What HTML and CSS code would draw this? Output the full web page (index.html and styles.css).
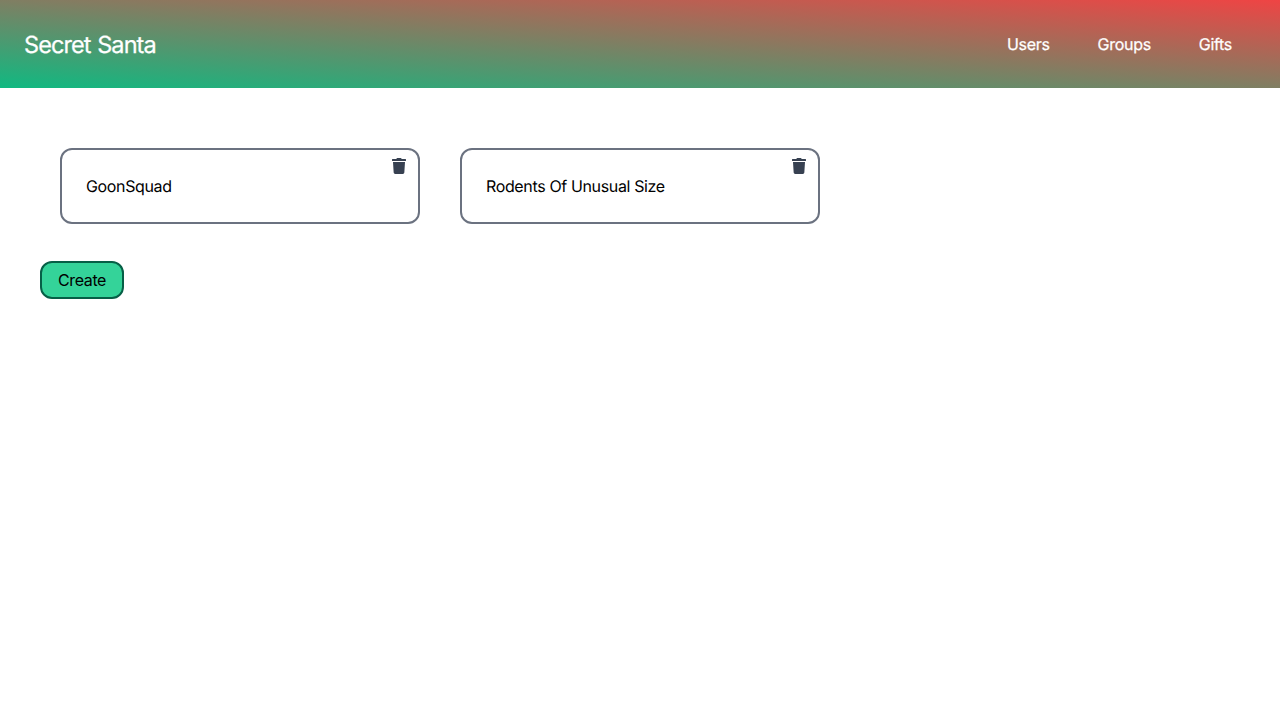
FILE: index.html
```html
<!DOCTYPE html>
<html lang="en">
<head>
<meta charset="utf-8">
<title>Secret Santa</title>
<link rel="stylesheet" href="styles.css">
</head>
<body>
<nav class="navbar">
  <a class="brand">Secret Santa</a>
  <div class="links"><a>Users</a><a>Groups</a><a>Gifts</a></div>
</nav>
<main class="content">
  <div class="groups">
    <div class="card">
      <span>GoonSquad</span>
      <svg class="trash" viewBox="0 0 448 512"><path d="M432 32H312l-9.400-18.700A24 24 0 0 0 281.100 0H166.800a23.720 23.720 0 0 0-21.400 13.300L136 32H16A16 16 0 0 0 0 48v32a16 16 0 0 0 16 16h416a16 16 0 0 0 16-16V48a16 16 0 0 0-16-16zM53.200 467a48 48 0 0 0 47.900 45h245.800a48 48 0 0 0 47.900-45L416 128H32z"/></svg>
    </div>
    <div class="card">
      <span>Rodents Of Unusual Size</span>
      <svg class="trash" viewBox="0 0 448 512"><path d="M432 32H312l-9.400-18.700A24 24 0 0 0 281.100 0H166.800a23.720 23.720 0 0 0-21.400 13.300L136 32H16A16 16 0 0 0 0 48v32a16 16 0 0 0 16 16h416a16 16 0 0 0 16-16V48a16 16 0 0 0-16-16zM53.200 467a48 48 0 0 0 47.900 45h245.800a48 48 0 0 0 47.900-45L416 128H32z"/></svg>
    </div>
  </div>
  <button class="create">Create</button>
</main>
</body>
</html>
```
FILE: styles.css
```css
* { box-sizing: border-box; }
body { margin: 0; background: #fff; color: #000; font: 16px/24px Inter, sans-serif; letter-spacing: -0.36px; text-rendering: geometricPrecision; }
.navbar { display: flex; align-items: center; justify-content: space-between; height: 88px; padding: 0 48px 0 24px; color: #fff; background: linear-gradient(to top right, #10b981, #ef4444); -webkit-text-stroke: 0.25px #fff; }
.brand { padding-top: 2px; font-size: 23.5px; line-height: 32px; letter-spacing: -0.9px; word-spacing: 0.8px; }
.links { display: flex; gap: 48px; letter-spacing: -0.3px; }
.content { padding: 40px; }
.groups { display: flex; flex-wrap: wrap; }
.card { position: relative; width: 360px; height: 76px; margin: 20px; padding: 24px; border: 2px solid #6b7280; border-radius: 12px; }
.trash { position: absolute; top: 8px; right: 12px; width: 14px; height: 16px; fill: #374151; }
.create { display: block; width: 84px; height: 38px; margin-top: 17px; padding: 0; border: 2px solid #065f46; border-radius: 12px; background: #34d399; color: #000; font: inherit; letter-spacing: inherit; }
```
